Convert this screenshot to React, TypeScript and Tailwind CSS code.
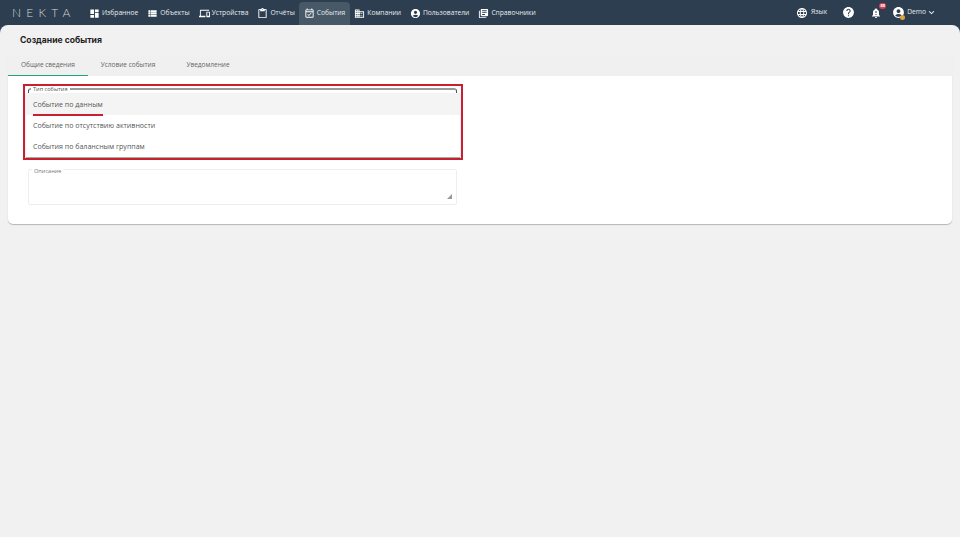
import {
  MdDashboard,
  MdViewList,
  MdDevices,
  MdOutlineContentPaste,
  MdOutlineEventAvailable,
  MdBusiness,
  MdAccountCircle,
  MdLibraryBooks,
  MdLanguage,
  MdHelp,
  MdNotificationImportant,
  MdKeyboardArrowDown,
} from "react-icons/md"

const navItems = [
  { label: "Избранное", icon: MdDashboard },
  { label: "Объекты", icon: MdViewList },
  { label: "Устройства", icon: MdDevices },
  { label: "Отчёты", icon: MdOutlineContentPaste },
  { label: "События", icon: MdOutlineEventAvailable, active: true },
  { label: "Компании", icon: MdBusiness },
  { label: "Пользователи", icon: MdAccountCircle },
  { label: "Справочники", icon: MdLibraryBooks },
]

const tabs = ["Общие сведения", "Условие события", "Уведомление"]

const options = ["Событие по данным", "Событие по отсутствию активности", "События по балансным группам"]

function Header() {
  return (
    <header className="flex h-[25px] items-center bg-[#2c3e50] pl-3 pr-[23px] text-[#e8ecef]">
      <div className="w-[72.5px] font-['Lato',sans-serif] text-[12px] font-light tracking-[5.2px] text-[#cfd6dc]">NEKTA</div>
      <nav className="flex h-full items-center">
        {navItems.map((item) => (
          <div
            key={item.label}
            className={`mt-[2px] flex h-[23px] items-center gap-[2px] rounded-t-sm px-[4.5px] ${item.active ? "bg-[#475867]" : ""}`}
          >
            <item.icon className="size-[11px] text-white" />
            <span className="text-[6.7px]">{item.label}</span>
          </div>
        ))}
      </nav>
      <div className="ml-auto flex items-center">
        <MdLanguage className="size-[12px] text-white" />
        <span className="ml-[3px] text-[6.7px]">Язык</span>
        <MdHelp className="ml-[15px] size-[13px] text-white" />
        <div className="relative ml-[15px]">
          <MdNotificationImportant className="size-[12px] text-white" />
          <span className="absolute -right-[4px] -top-[4px] flex h-[6px] w-[7px] items-center justify-center rounded-full bg-[#e23b4e] text-[4px] font-bold text-white">
            88
          </span>
        </div>
        <div className="relative ml-[10px]">
          <MdAccountCircle className="size-[13px] text-white" />
          <span className="absolute -bottom-px right-0 size-[5px] rounded-full bg-[#d9a441]" />
        </div>
        <span className="ml-[2px] text-[6.7px]">Demo</span>
        <MdKeyboardArrowDown className="size-[11px] text-white" />
      </div>
    </header>
  )
}

function TypeSelect() {
  return (
    <div className="relative h-[65px]">
      {/* field outline behind the open menu */}
      <div className="absolute inset-x-0 top-0 h-[10px] rounded-t-[3px] border-x border-t-2 border-x-[#44576a] border-t-[#9a9a9a]" />
      <span className="absolute left-[3px] top-[-3px] bg-white px-[2px] text-[5.6px] leading-[8px] text-[#555]">Тип события</span>
      <ul className="absolute -left-[2px] -right-[3px] top-[5px] bg-white shadow-[0_1px_1px_rgba(90,110,80,0.55)]">
        {options.map((option, i) => (
          <li
            key={option}
            className={`relative flex items-center px-[7px] text-[7.05px] text-[#555] ${i === 0 ? "h-[22px] bg-[#f4f4f4]" : "h-[21px]"}`}
          >
            {option}
            {i === 0 && <span className="absolute -bottom-px left-[7px] h-[2px] w-[70px] bg-[#c8202f]" />}
          </li>
        ))}
      </ul>
      {/* red annotation frame */}
      <div className="pointer-events-none absolute -left-[5px] -right-[6px] -top-[4px] -bottom-[7px] border-2 border-[#c8202f]" />
    </div>
  )
}

export default function App() {
  return (
    <div className="flex h-[537px] flex-col overflow-hidden bg-[#2c3e50] font-['Open_Sans',sans-serif]">
      <Header />
      <main className="flex-1 rounded-t-[8px] bg-[#f1f1f1] px-2">
        <h1 className="ml-3 mt-[9px] font-['Inter',sans-serif] text-[8.6px] font-bold leading-[12px] text-[#1e1e1e]">Создание события</h1>
        <div className="mt-[9px] flex h-[21px] bg-[#f0f0f0] shadow-[0_1px_1px_rgba(0,0,0,0.06)]">
          {tabs.map((tab, i) => (
            <div
              key={tab}
              className={`flex h-full w-[80px] items-center justify-center border-b-[1.5px] text-[6.5px] text-[#666] ${
                i === 0 ? "border-[#1fa37d]" : "border-transparent"
              }`}
            >
              {tab}
            </div>
          ))}
        </div>
        <section className="h-[148px] rounded-b-[5px] bg-white px-5 pt-[12px] shadow-[0_1px_1px_rgba(0,0,0,0.25)]">
          <div className="w-[429px]">
            <TypeSelect />
            <div className="relative mt-[16px] h-[36px] rounded-[2px] border border-[#eeeeee]">
              <span className="absolute left-[3px] top-[-3px] bg-white px-[2px] text-[5.6px] leading-[8px] text-[#777]">Описание</span>
              <svg className="absolute bottom-[5px] right-[4px] size-[5px]" viewBox="0 0 5 5">
                <path d="M5 0L0 5h5z" fill="#999" />
              </svg>
            </div>
          </div>
        </section>
      </main>
    </div>
  )
}
